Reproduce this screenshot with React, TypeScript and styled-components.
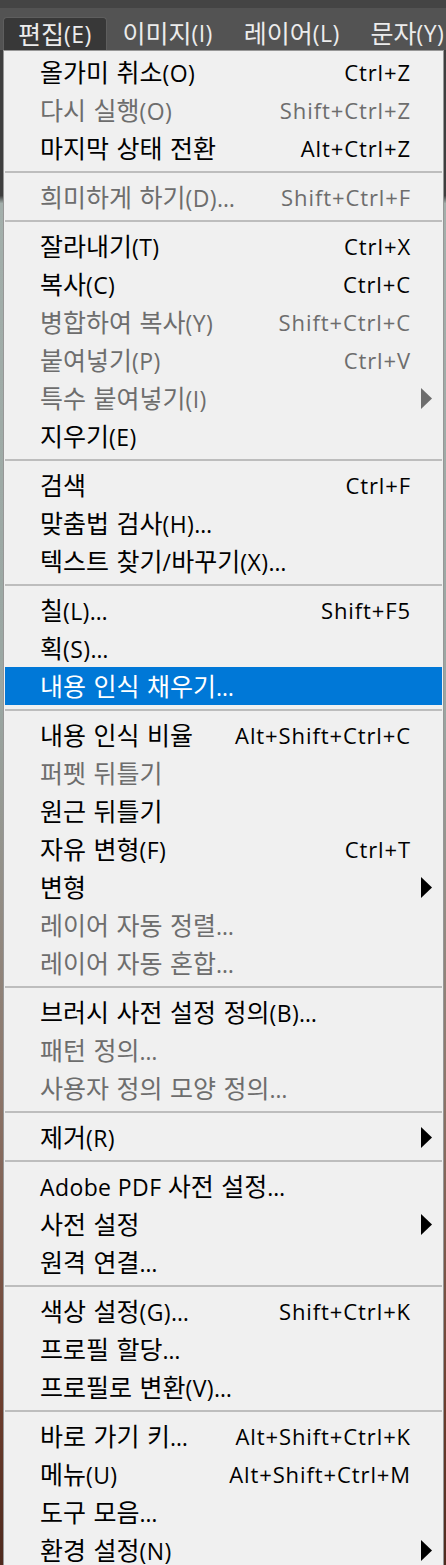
import React from "react";
import styled, { createGlobalStyle, css } from "styled-components";

const GlobalStyle = createGlobalStyle`
  html, body {
    margin: 0;
    padding: 0;
  }
  body {
    width: 446px;
    height: 1565px;
    overflow: hidden;
    background: linear-gradient(
      180deg,
      #3e3e3e 0%,
      #3e3e3e 12.5%,
      #a3afab 13%,
      #9aa6a2 45%,
      #8b7468 70%,
      #6b3c2c 90%,
      #4e2a1e 100%
    );
    font-family: "Open Sans", "Noto Sans CJK KR", sans-serif;
  }
`;

const Page = styled.div`
  width: 446px;
  display: flex;
  flex-direction: column;
`;

const MenuBar = styled.div`
  height: 50px;
  background: #535353;
  border-top: 8px solid #444444;
  box-sizing: border-box;
  display: flex;
  align-items: flex-end;
  padding-left: 3px;
  overflow: hidden;
  white-space: nowrap;
`;

const BarTitle = styled.div<{ $active?: boolean }>`
  flex: none;
  height: 33px;
  box-sizing: border-box;
  padding: 0 15px;
  margin-right: 1px;
  display: flex;
  align-items: center;
  font-size: 22px;
  line-height: 1;
  color: #ececec;
  border-radius: 4px 4px 0 0;
  ${(p) =>
    p.$active &&
    css`
      background: #383838;
      border: 1px solid #5e5e5e;
      border-bottom: none;
      padding: 0 14px;
    `}
`;

const Panel = styled.div`
  margin: 0 2px 0 3px;
  background: #f0f0f0;
  border: 1px solid #979797;
  padding: 2px 1px 0;
  display: flex;
  flex-direction: column;
`;

const Row = styled.div<{ $disabled?: boolean; $active?: boolean }>`
  height: 38px;
  display: grid;
  grid-template-columns: 1fr auto 32px;
  align-items: center;
  padding-left: 35px;
  font-size: 22px;
  white-space: nowrap;
  color: ${(p) => (p.$active ? "#ffffff" : p.$disabled ? "#6d6d6d" : "#000000")};
  background: ${(p) => (p.$active ? "#0078d7" : "transparent")};
`;

const Label = styled.span`
  line-height: 1;
`;

const Hangul = styled.span`
  font-size: 25px;
  word-spacing: 1px;
`;

const Latin = styled.span`
  font-size: 23px;
  letter-spacing: 0.4px;
`;

const Shortcut = styled.span`
  text-align: right;
  letter-spacing: 0.9px;
  margin-right: -1px;
`;

const ArrowCell = styled.span`
  display: flex;
  align-items: center;
  padding-left: 11px;
`;

const Separator = styled.div`
  height: 2px;
  background: #bdbdbd;
  margin: 4px 0 5px;
`;

type Item = {
  label: string;
  shortcut?: string;
  disabled?: boolean;
  submenu?: boolean;
  active?: boolean;
};

const groups: Item[][] = [
  [
    { label: "올가미 취소(O)", shortcut: "Ctrl+Z" },
    { label: "다시 실행(O)", shortcut: "Shift+Ctrl+Z", disabled: true },
    { label: "마지막 상태 전환", shortcut: "Alt+Ctrl+Z" },
  ],
  [{ label: "희미하게 하기(D)…", shortcut: "Shift+Ctrl+F", disabled: true }],
  [
    { label: "잘라내기(T)", shortcut: "Ctrl+X" },
    { label: "복사(C)", shortcut: "Ctrl+C" },
    { label: "병합하여 복사(Y)", shortcut: "Shift+Ctrl+C", disabled: true },
    { label: "붙여넣기(P)", shortcut: "Ctrl+V", disabled: true },
    { label: "특수 붙여넣기(I)", submenu: true, disabled: true },
    { label: "지우기(E)" },
  ],
  [
    { label: "검색", shortcut: "Ctrl+F" },
    { label: "맞춤법 검사(H)…" },
    { label: "텍스트 찾기/바꾸기(X)…" },
  ],
  [
    { label: "칠(L)…", shortcut: "Shift+F5" },
    { label: "획(S)…" },
    { label: "내용 인식 채우기…", active: true },
  ],
  [
    { label: "내용 인식 비율", shortcut: "Alt+Shift+Ctrl+C" },
    { label: "퍼펫 뒤틀기", disabled: true },
    { label: "원근 뒤틀기" },
    { label: "자유 변형(F)", shortcut: "Ctrl+T" },
    { label: "변형", submenu: true },
    { label: "레이어 자동 정렬…", disabled: true },
    { label: "레이어 자동 혼합…", disabled: true },
  ],
  [
    { label: "브러시 사전 설정 정의(B)…" },
    { label: "패턴 정의…", disabled: true },
    { label: "사용자 정의 모양 정의…", disabled: true },
  ],
  [{ label: "제거(R)", submenu: true }],
  [
    { label: "Adobe PDF 사전 설정…" },
    { label: "사전 설정", submenu: true },
    { label: "원격 연결…" },
  ],
  [
    { label: "색상 설정(G)…", shortcut: "Shift+Ctrl+K" },
    { label: "프로필 할당…" },
    { label: "프로필로 변환(V)…" },
  ],
  [
    { label: "바로 가기 키…", shortcut: "Alt+Shift+Ctrl+K" },
    { label: "메뉴(U)", shortcut: "Alt+Shift+Ctrl+M" },
    { label: "도구 모음…" },
    { label: "환경 설정(N)", submenu: true },
  ],
];

const HANGUL_RUN = /([\uAC00-\uD7A3]+(?: [\uAC00-\uD7A3]+)*)/;

const MixedText = ({ text }: { text: string }) => (
  <>
    {text.split(HANGUL_RUN).map((part, i) =>
      part === "" ? null : i % 2 === 1 ? (
        <Hangul key={i}>{part}</Hangul>
      ) : (
        <Latin key={i}>{part}</Latin>
      )
    )}
  </>
);

const Arrow = ({ color }: { color: string }) => (
  <svg width="11" height="21" viewBox="0 0 11 21">
    <polygon points="0,0 11,10.5 0,21" fill={color} />
  </svg>
);

const MenuRow = ({ item }: { item: Item }) => {
  const color = item.active ? "#ffffff" : item.disabled ? "#6d6d6d" : "#000000";
  return (
    <Row $disabled={item.disabled} $active={item.active}>
      <Label>
        <MixedText text={item.label} />
      </Label>
      <Shortcut>{item.shortcut ?? ""}</Shortcut>
      <ArrowCell>{item.submenu && <Arrow color={color} />}</ArrowCell>
    </Row>
  );
};

export default function App() {
  return (
    <Page>
      <GlobalStyle />
      <MenuBar>
        <BarTitle $active>
          <MixedText text="편집(E)" />
        </BarTitle>
        <BarTitle>
          <MixedText text="이미지(I)" />
        </BarTitle>
        <BarTitle>
          <MixedText text="레이어(L)" />
        </BarTitle>
        <BarTitle>
          <MixedText text="문자(Y)" />
        </BarTitle>
      </MenuBar>
      <Panel>
        {groups.map((g, gi) => (
          <React.Fragment key={gi}>
            {gi > 0 && <Separator />}
            {g.map((item, ii) => (
              <MenuRow key={ii} item={item} />
            ))}
          </React.Fragment>
        ))}
      </Panel>
    </Page>
  );
}
